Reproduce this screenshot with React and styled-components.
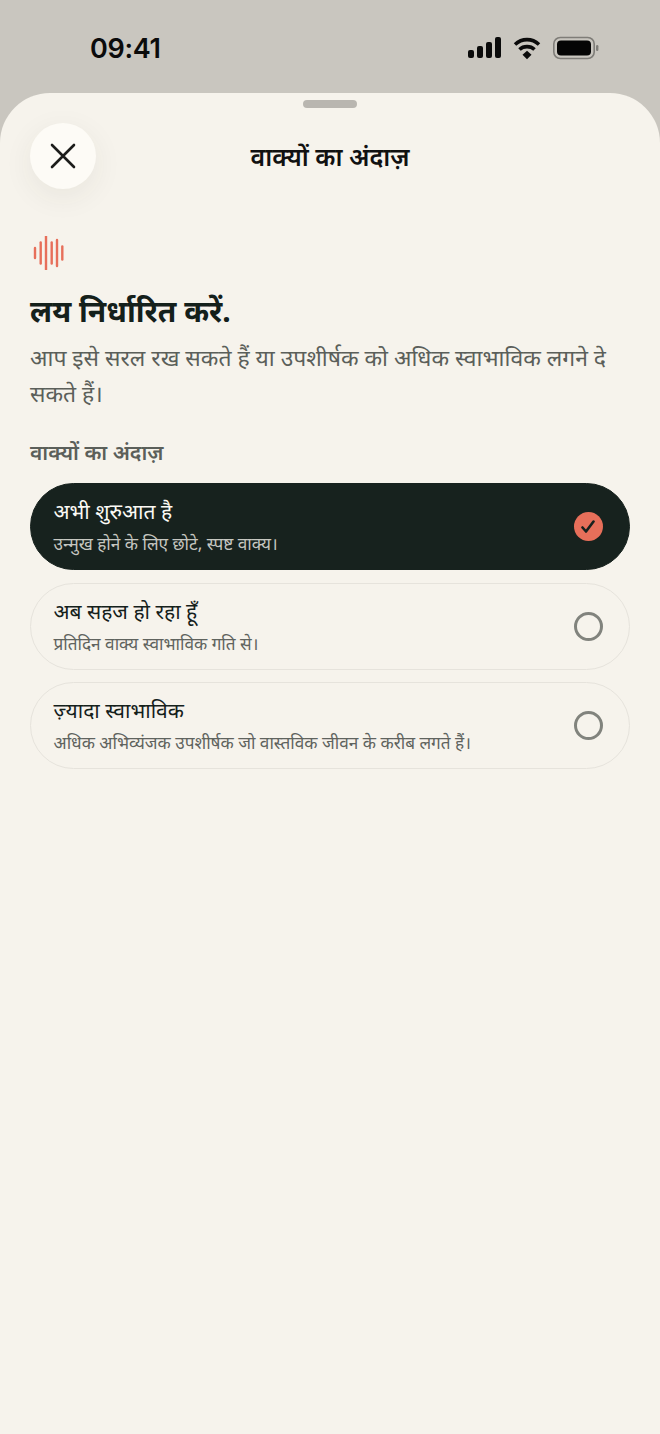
import React from 'react'
import styled, { createGlobalStyle } from 'styled-components'

const GlobalStyle = createGlobalStyle`
  html, body { margin: 0; padding: 0; background: #c9c6bf; }
  body { font-family: "Noto Sans", "Inter", "Liberation Sans", sans-serif; }
  * { box-sizing: border-box; }
`

const options = [
  { title: 'अभी शुरुआत है', hint: 'उन्मुख होने के लिए छोटे, स्पष्ट वाक्य।', selected: true },
  { title: 'अब सहज हो रहा हूँ', hint: 'प्रतिदिन वाक्य स्वाभाविक गति से।', selected: false },
  { title: 'ज़्यादा स्वाभाविक', hint: 'अधिक अभिव्यंजक उपशीर्षक जो वास्तविक जीवन के करीब लगते हैं।', selected: false },
]

const waveBars = [
  [5, 10], [10.7, 21], [16, 33], [21.7, 21], [27, 26], [32.3, 13],
]

const Page = styled.div`
  width: 660px;
  height: 1434px;
  display: flex;
  flex-direction: column;
  overflow: hidden;
`

const StatusBar = styled.div`
  height: 93px;
  flex: none;
  display: flex;
  align-items: flex-start;
  justify-content: space-between;
  padding: 33px 61px 0 90px;
`

const Clock = styled.div`
  font-family: "Inter", "Liberation Sans", sans-serif;
  font-size: 27px;
  line-height: 32px;
  font-weight: 600;
  letter-spacing: -0.3px;
  color: #0b0b0b;
`

const StatusIcons = styled.div`
  display: flex;
  align-items: center;
  gap: 10px;
  height: 30px;
`

const Sheet = styled.div`
  flex: 1;
  position: relative;
  background: #f6f3ec;
  border-radius: 50px 50px 0 0;
  padding: 30px 30px 0;
`

const Handle = styled.div`
  position: absolute;
  top: 7px;
  left: 303px;
  width: 54px;
  height: 8px;
  border-radius: 4px;
  background: #b9b6b0;
`

const Header = styled.div`
  display: flex;
  align-items: center;
  justify-content: center;
  position: relative;
  height: 66px;
`

const CloseButton = styled.button`
  position: absolute;
  left: 0;
  top: 0;
  width: 66px;
  height: 66px;
  border: 0;
  padding: 0;
  border-radius: 50%;
  background: #fdfbf6;
  box-shadow: 0 8px 30px rgba(60, 55, 45, 0.07);
  display: flex;
  align-items: center;
  justify-content: center;
`

const SheetTitle = styled.h2`
  margin: 0;
  font-size: 25px;
  line-height: 30px;
  font-weight: 600;
  color: #111;
`

const WaveIcon = styled.svg`
  display: block;
  margin-top: 47px;
`

const Heading = styled.h1`
  margin: 20px 0 0;
  font-size: 30px;
  line-height: 42px;
  font-weight: 700;
  color: #14201b;
`

const Lead = styled.p`
  margin: 8px 0 0;
  font-size: 22.9px;
  line-height: 36px;
  color: #5b5f5a;
`

const GroupLabel = styled.div`
  margin-top: 25px;
  font-size: 21px;
  line-height: 30px;
  font-weight: 600;
  color: #5b5f5a;
`

const OptionList = styled.div`
  margin-top: 16px;
  display: flex;
  flex-direction: column;
  gap: 12.5px;
`

const Option = styled.div`
  height: 87px;
  border-radius: 44px;
  padding: 0 26.5px 0 22.5px;
  display: flex;
  align-items: center;
  justify-content: space-between;
  background: ${p => (p.$selected ? '#17221e' : 'transparent')};
  border: 1.5px solid ${p => (p.$selected ? '#17221e' : '#e6e3dc')};
`

const OptionText = styled.div`
  display: flex;
  flex-direction: column;
  gap: 6px;
  margin-top: -1px;
`

const OptionTitle = styled.div`
  font-size: 21px;
  line-height: 30px;
  font-weight: 450;
  color: ${p => (p.$selected ? '#fbfaf5' : '#14201b')};
`

const OptionHint = styled.div`
  font-size: 17.2px;
  line-height: 24px;
  color: ${p => (p.$selected ? '#c6c7c1' : '#5f635e')};
`

const Radio = styled.div`
  width: 29px;
  height: 29px;
  flex: none;
  border-radius: 50%;
  display: flex;
  align-items: center;
  justify-content: center;
  background: ${p => (p.$selected ? '#e76f5a' : 'transparent')};
  border: ${p => (p.$selected ? '0' : '3px solid #81837d')};
`

const Signal = () => (
  <svg width="34" height="22" viewBox="0 0 34 22" fill="#0b0b0b">
    <rect x="0" y="13" width="6" height="8" rx="2" />
    <rect x="9" y="9" width="6" height="12" rx="2" />
    <rect x="18" y="5" width="6" height="16" rx="2" />
    <rect x="27" y="0" width="6" height="21" rx="2" />
  </svg>
)

const Wifi = () => (
  <svg width="30" height="24" viewBox="0 0 30 24" fill="none" stroke="#0b0b0b" strokeWidth="3.6">
    <path d="M3 8.5C10 2 20 2 27 8.5" />
    <path d="M7.5 13.5C11.5 9.7 18.5 9.7 22.5 13.5" />
    <path d="M10.5 18.8l4.5-4 4.5 4-4.5 4.4z" fill="#0b0b0b" stroke="none" />
  </svg>
)

const Battery = () => (
  <svg width="47" height="24" viewBox="0 0 47 24">
    <rect x="1.8" y="1.5" width="40.4" height="21" rx="6.5" fill="none" stroke="#7f7d78" strokeWidth="1.6" />
    <rect x="5" y="4.5" width="34" height="15" rx="4" fill="#050505" />
    <rect x="44" y="9" width="2.4" height="6" rx="1.2" fill="#7f7d78" />
  </svg>
)

export default function App() {
  return (
    <Page>
      <GlobalStyle />
      <StatusBar>
        <Clock>09:41</Clock>
        <StatusIcons>
          <Signal />
          <Wifi />
          <Battery />
        </StatusIcons>
      </StatusBar>
      <Sheet>
        <Handle />
        <Header>
          <CloseButton aria-label="बंद करें">
            <svg width="26" height="26" viewBox="0 0 26 26" fill="none" stroke="#1c1c1a" strokeWidth="2.6" strokeLinecap="round">
              <path d="M2 2l22 22M24 2L2 24" />
            </svg>
          </CloseButton>
          <SheetTitle>वाक्यों का अंदाज़</SheetTitle>
        </Header>
        <WaveIcon width="36" height="34" viewBox="0 0 36 34" stroke="#e76f5a" strokeWidth="2.4" strokeLinecap="round">
          {waveBars.map(([x, h]) => (
            <line key={x} x1={x} x2={x} y1={17 - h / 2} y2={17 + h / 2} />
          ))}
        </WaveIcon>
        <Heading>लय निर्धारित करें.</Heading>
        <Lead>आप इसे सरल रख सकते हैं या उपशीर्षक को अधिक स्वाभाविक लगने दे सकते हैं।</Lead>
        <GroupLabel>वाक्यों का अंदाज़</GroupLabel>
        <OptionList>
          {options.map(o => (
            <Option key={o.title} $selected={o.selected}>
              <OptionText>
                <OptionTitle $selected={o.selected}>{o.title}</OptionTitle>
                <OptionHint $selected={o.selected}>{o.hint}</OptionHint>
              </OptionText>
              <Radio $selected={o.selected}>
                {o.selected && (
                  <svg width="16" height="14" viewBox="0 0 16 14" fill="none" stroke="#17221e" strokeWidth="2.6" strokeLinecap="round" strokeLinejoin="round">
                    <path d="M2.5 7.5l3.5 4 7.5-10" />
                  </svg>
                )}
              </Radio>
            </Option>
          ))}
        </OptionList>
      </Sheet>
    </Page>
  )
}
